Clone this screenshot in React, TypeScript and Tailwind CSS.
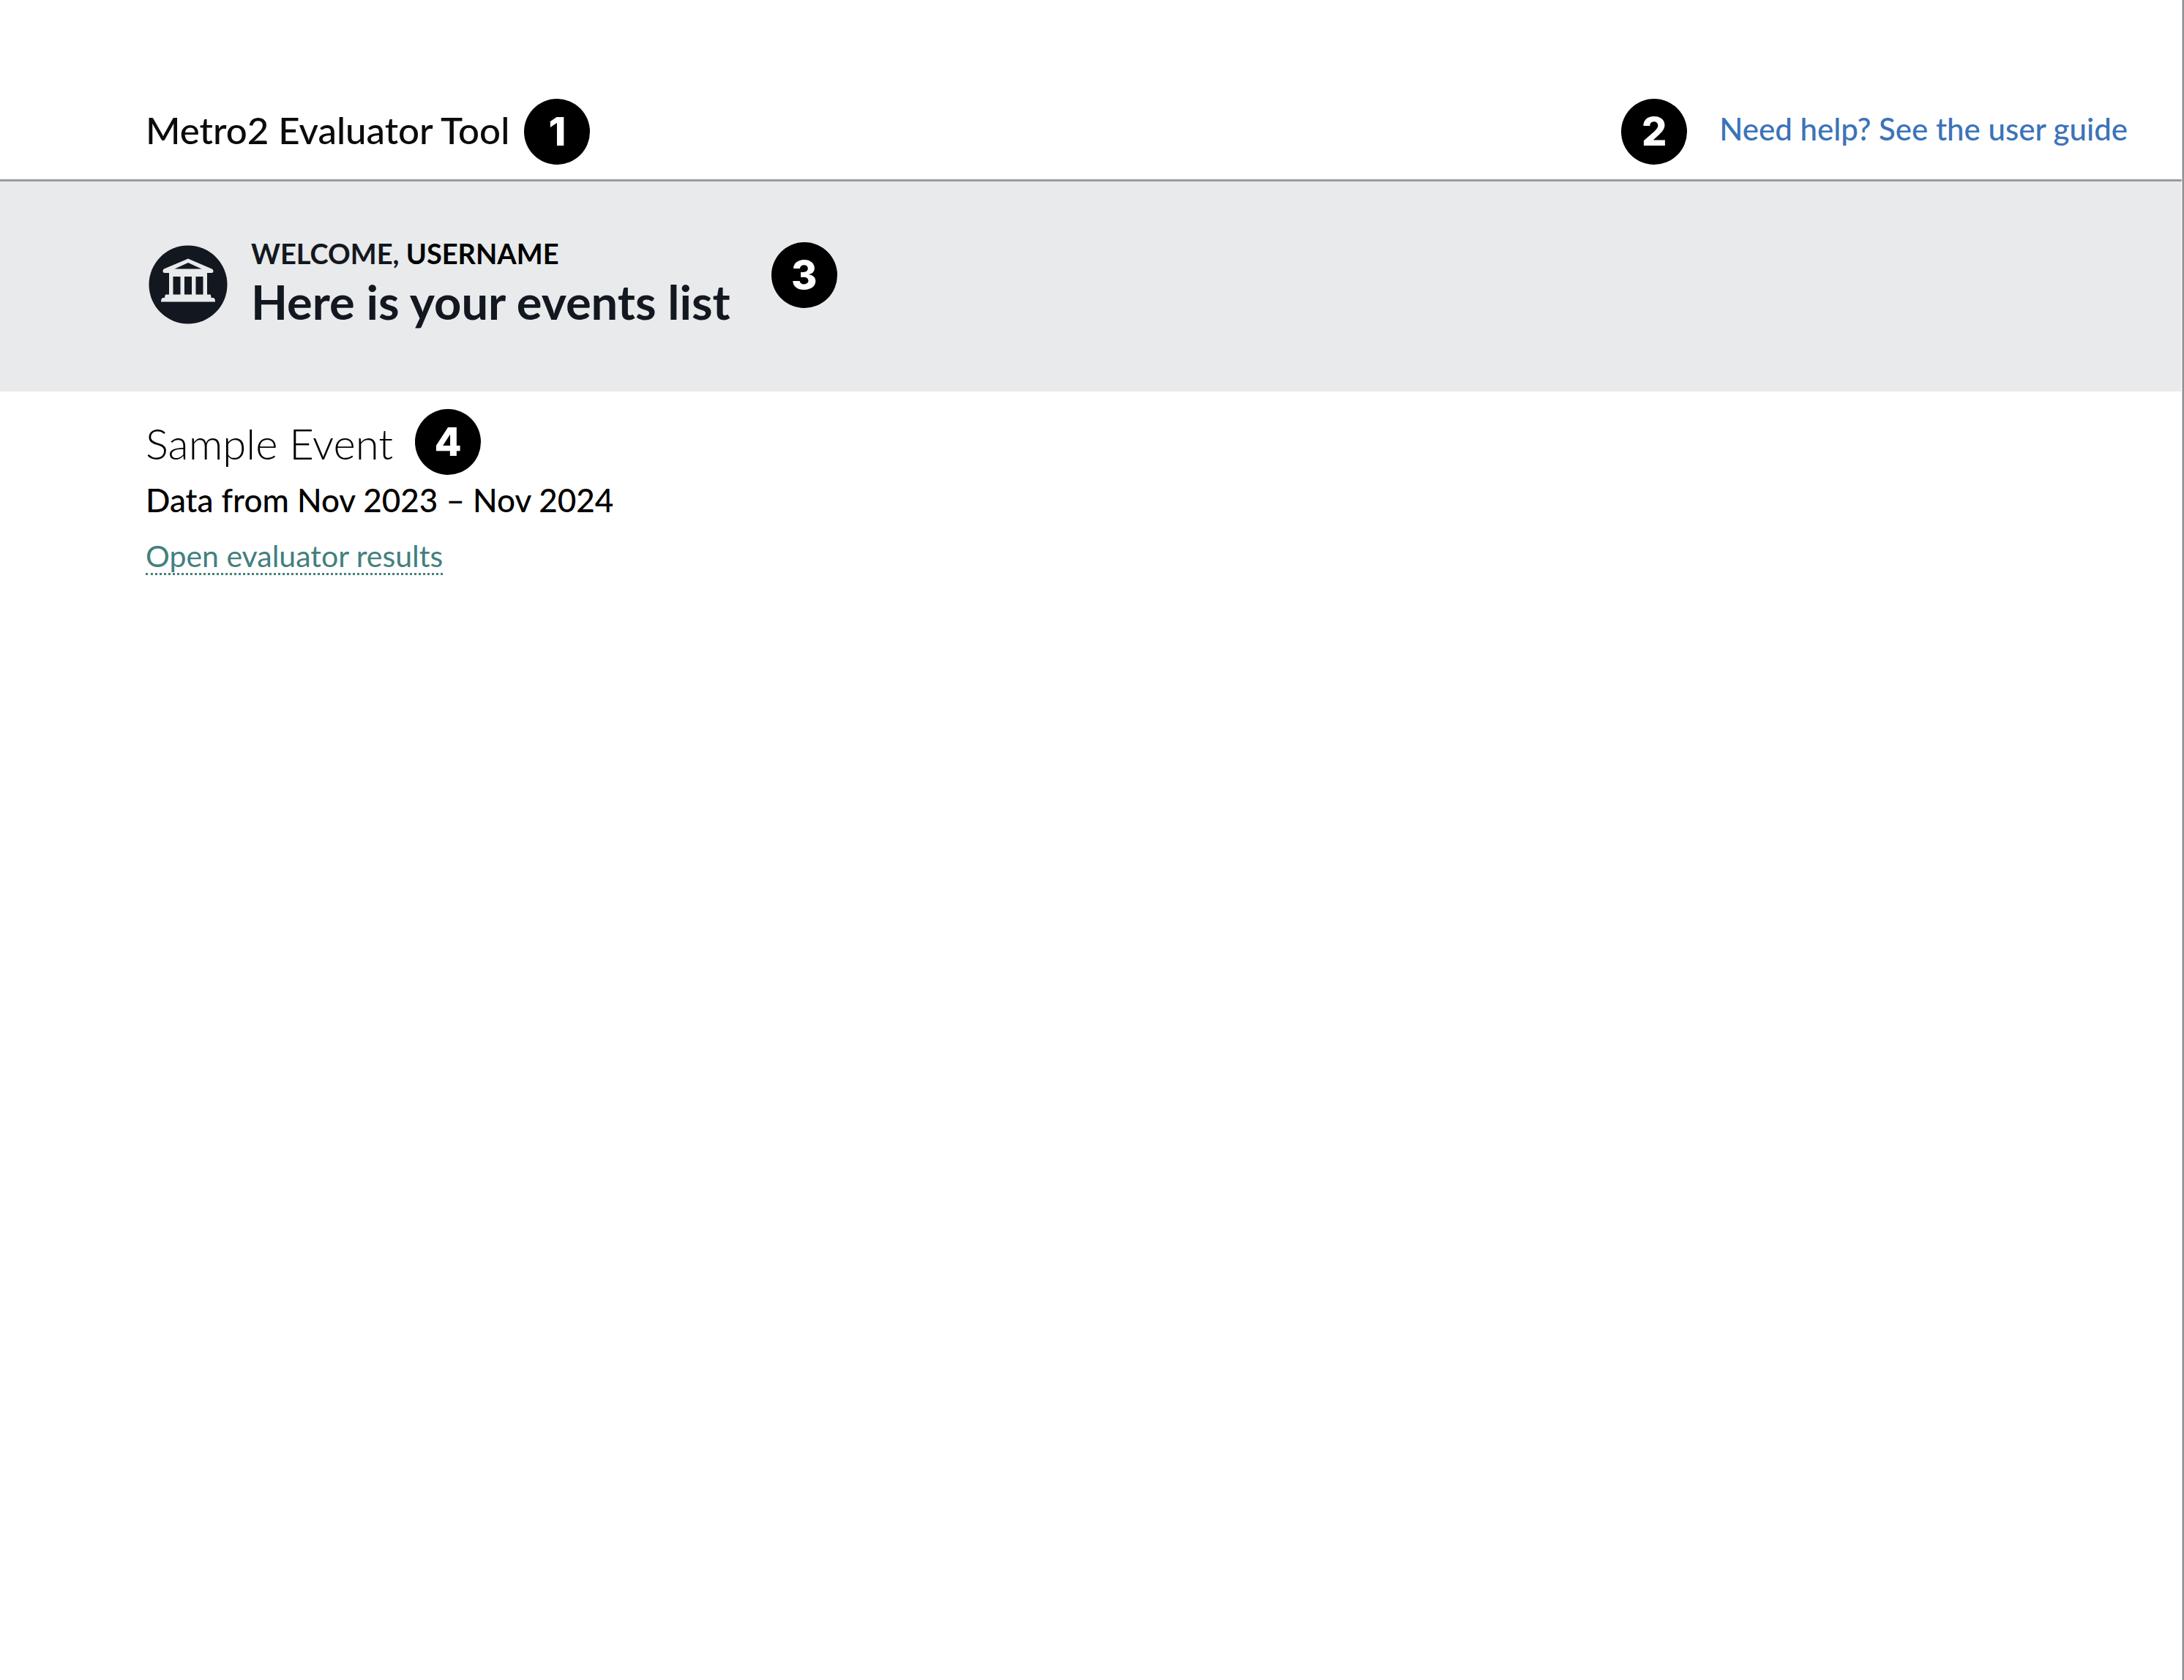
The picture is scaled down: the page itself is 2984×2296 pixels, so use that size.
import React from "react";

function Badge({ n }: { n: number }) {
  return (
    <span className="flex size-[90px] shrink-0 items-center justify-center rounded-full bg-black font-['Inter',sans-serif] text-[54px] leading-none font-extrabold text-white">
      {n}
    </span>
  );
}

function BankIcon() {
  return (
    <svg viewBox="0 0 108 108" className="size-[108px] shrink-0" aria-hidden="true">
      <circle cx="54" cy="54" r="53.5" fill="#131820" />
      <path
        fill="#e8eaeb"
        fillRule="evenodd"
        d="M54 18.500 86.500 32.500Q88.500 33.500 88.500 35.500 88.500 38 86 38H80V67.500H84Q85.500 67.500 85.500 72H88.500Q91 72.500 91 77.500H17Q17 72.500 19.500 72H22Q22 67.500 24 67.500H28V38H22Q19.500 38 19.500 35.500 19.500 33.500 21 32.500ZM54 24 35.500 32.500H72.500ZM33.500 43V67.500H43.500V43ZM49 43V67.500H59V43ZM64.500 43V67.500H74.500V43Z"
      />
    </svg>
  );
}

export default function App() {
  return (
    <div className="flex min-h-screen flex-col border-r border-[#b4b6b8] bg-white font-['Lato',sans-serif] text-black">
      <div className="grow border-r border-[#4b4c4e] pr-px">
        <header className="flex items-end justify-between border-b-3 border-[#9b9b9b] pt-[135px] pr-[74px] pb-5 pl-[199px]">
          <div className="flex items-center gap-5">
            <h1 className="pb-1 text-[51px] leading-[60px] font-medium text-[#0b0b0b]">Metro2 Evaluator Tool</h1>
            <Badge n={1} />
          </div>
          <div className="flex items-center gap-11">
            <Badge n={2} />
            <a href="#guide" className="pb-2 text-[42px] leading-[60px] font-medium text-[#3b73b9]">
              Need help? See the user guide
            </a>
          </div>
        </header>

        <section className="flex items-start bg-[#e8eaeb] pt-[78px] pb-[83px] pl-[203px]">
          <div className="flex items-center gap-8">
            <BankIcon />
            <div>
              <p className="text-[38px] leading-[40px] font-bold text-[#131820]">
                WELCOME, <span className="text-black">USERNAME</span>
              </p>
              <h2 className="pt-1.5 text-[65px] leading-[80px] font-bold text-[#131820]">Here is your events list</h2>
            </div>
          </div>
          <div className="pt-[5px] pl-14">
            <Badge n={3} />
          </div>
        </section>

        <main className="pt-6 pl-[199px]">
          <div className="flex items-center gap-7.5">
            <h3 className="pt-1 text-[58px] leading-[80px] font-light">Sample Event</h3>
            <Badge n={4} />
          </div>
          <p className="pt-1 text-[44px] leading-[60px] font-medium">Data from Nov 2023 – Nov 2024</p>
          <a
            href="#results"
            className="mt-6 inline-block border-b-3 border-dotted border-[#43807d] text-[41px] leading-[46px] text-[#43807d]"
          >
            Open evaluator results
          </a>
        </main>
      </div>
    </div>
  );
}
